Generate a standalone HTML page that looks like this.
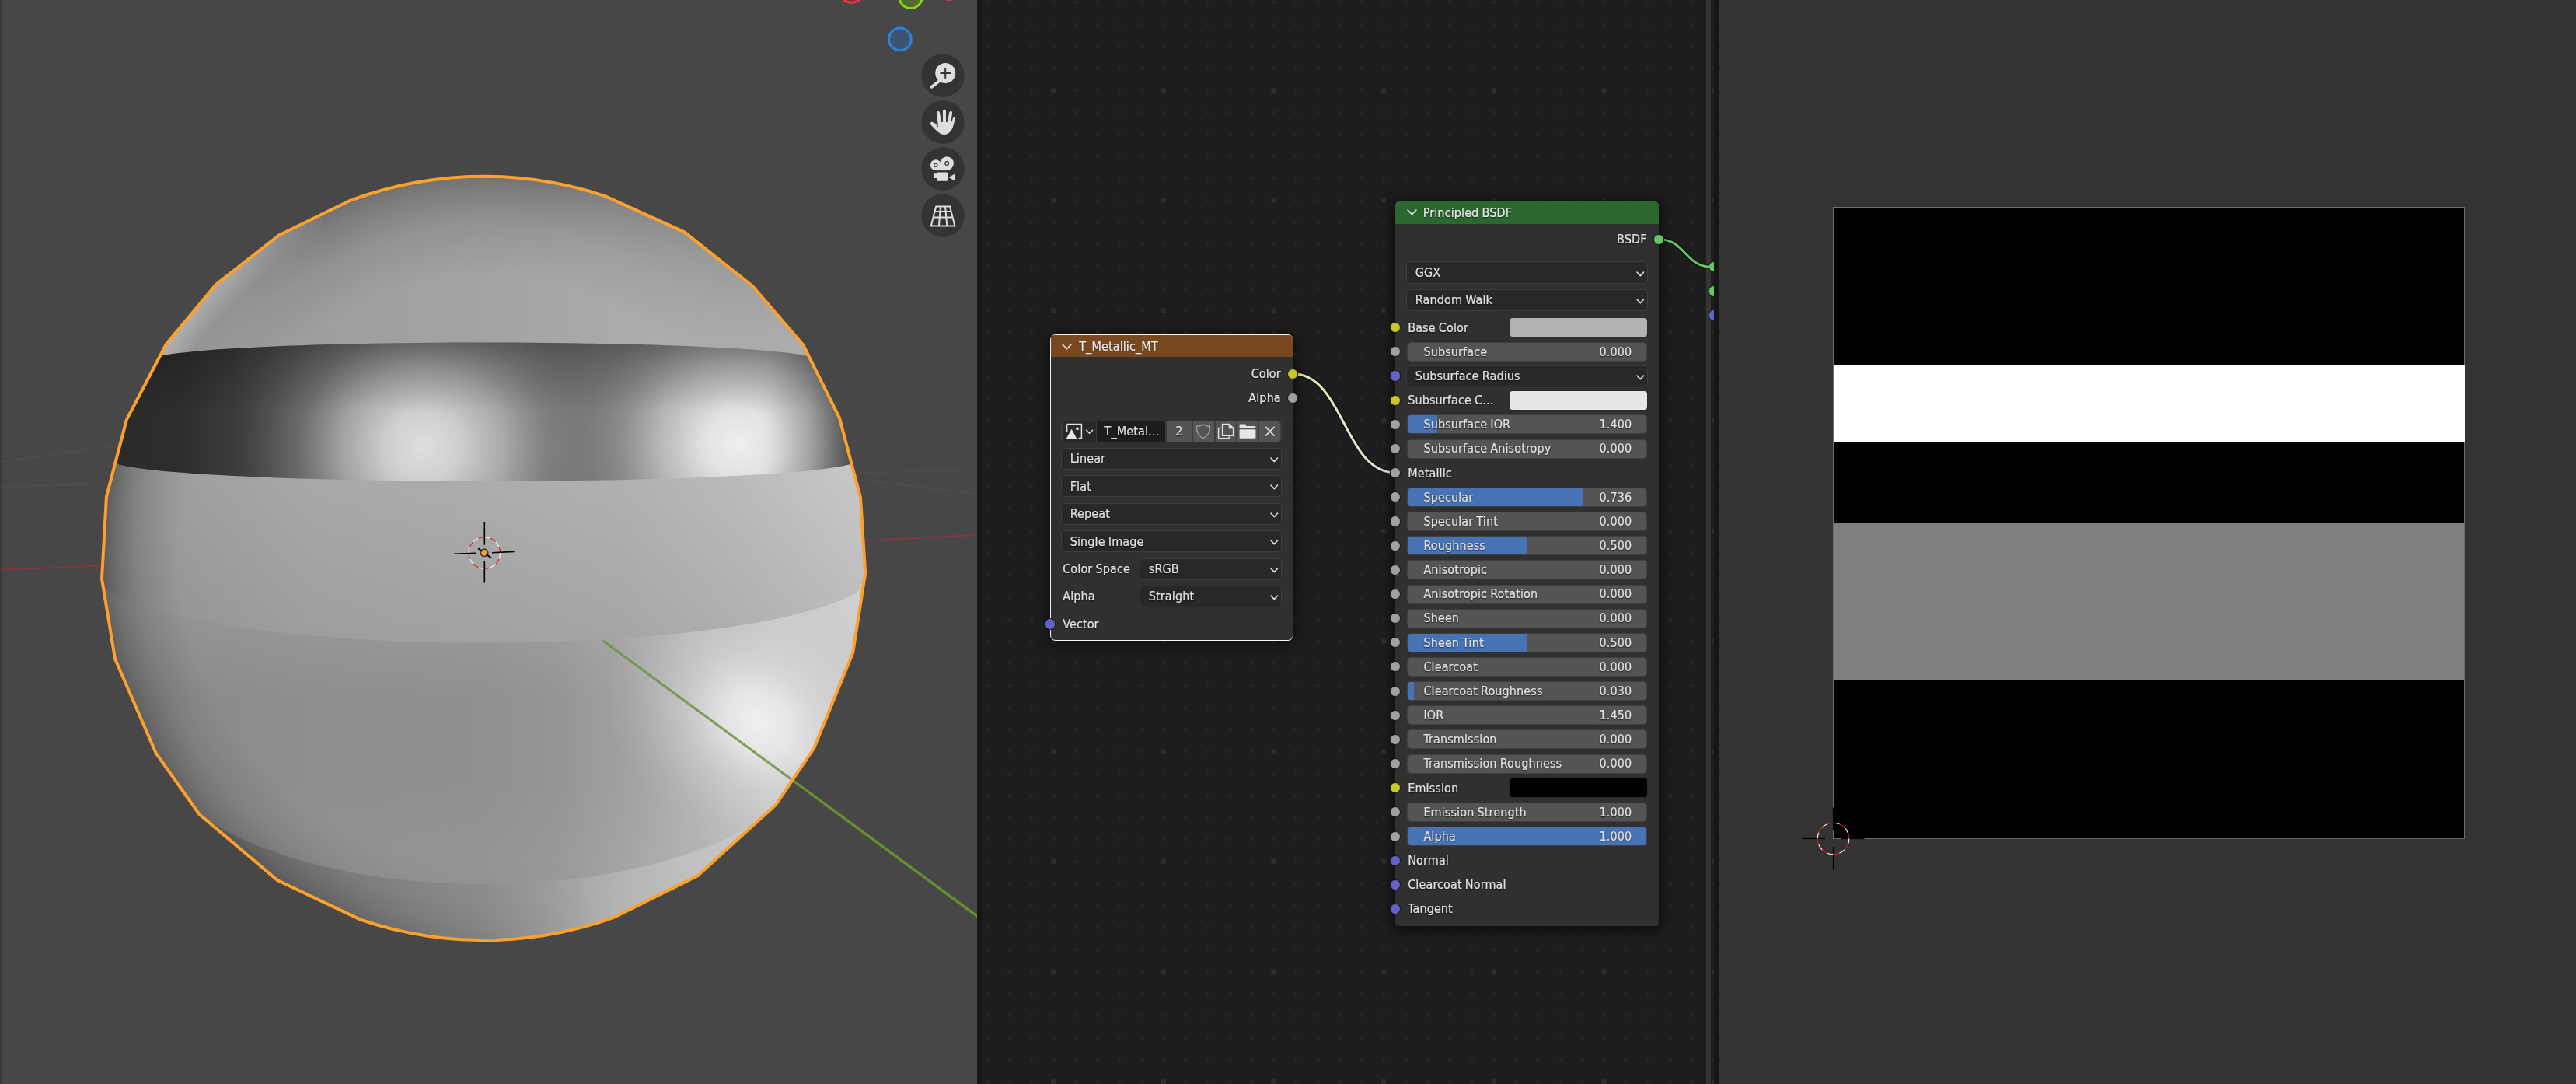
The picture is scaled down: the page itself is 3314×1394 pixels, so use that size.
<!DOCTYPE html><html><head><meta charset="utf-8"><title>Blender</title><style>

html,body{margin:0;padding:0}
body{width:3314px;height:1394px;background:#1d1d1d;position:relative;overflow:hidden;
 font-family:'DejaVu Sans Condensed','DejaVu Sans','Liberation Sans',sans-serif;font-size:16px;color:#e4e4e4;-webkit-font-smoothing:antialiased}
.abs{position:absolute}
#vp{position:absolute;left:0;top:0;width:1257px;height:1394px;background:#474747;overflow:hidden}
#ne{will-change:transform;position:absolute;left:1257px;top:0;width:955px;height:1394px;background:#1d1d1d;overflow:hidden}
#ie{position:absolute;left:2212px;top:0;width:1102px;height:1394px;background:#333333;overflow:hidden}
.node{position:absolute;box-sizing:border-box;background:#303030;border-radius:6px;box-shadow:0 2px 14px 3px rgba(0,0,0,.55)}
.hdr{position:absolute;left:0;top:0;right:0;border-radius:5px 5px 0 0}
.t{position:absolute;white-space:nowrap;letter-spacing:.12px;word-spacing:-.6px;-webkit-text-stroke:.2px currentColor;line-height:20px;height:20px;text-shadow:0 1px 1.5px rgba(0,0,0,.75)}
.dd{position:absolute;box-sizing:border-box;background:#282828;border:1.3px solid #3e3e3e;border-radius:5px}
.sl{position:absolute;box-sizing:border-box;background:#545454;border:1.3px solid #3f3f3f;border-radius:5px;overflow:hidden}
.sl i{position:absolute;left:0;top:0;bottom:0;background:#4772b3}
.sw{position:absolute;box-sizing:border-box;border-radius:4px;box-shadow:0 0 0 1px #2b2b2b}
.sk{position:absolute;width:12.2px;height:12.2px;border-radius:50%;box-sizing:content-box;border:1px solid #141414}

</style></head><body>
<div id="vp">
<svg class="abs" style="left:0;top:0" width="1257" height="1394" viewBox="0 0 1257 1394">
<defs>
<clipPath id="sph"><polygon points="450.5,257.8 471.5,250.5 492.9,244.1 514.5,238.7 536.4,234.3 558.4,230.9 580.5,228.5 602.8,227.1 625.1,226.7 647.4,227.3 669.6,229.0 691.7,231.6 713.7,235.2 735.5,239.9 757.1,245.5 778.4,252.1 880.5,298.4 968.0,367.8 1033.3,443.5 1080.0,537.5 1107.0,640.0 1113.2,737.2 1097.2,839.5 1047.0,962.5 998.0,1034.9 897.2,1126.4 788.9,1180.1 768.0,1187.1 746.8,1193.1 725.3,1198.2 703.6,1202.4 681.8,1205.5 659.8,1207.7 637.8,1208.9 615.8,1209.1 593.7,1208.3 571.7,1206.5 549.8,1203.7 528.1,1199.9 506.6,1195.2 485.2,1189.5 464.2,1182.9 356.8,1132.0 256.6,1047.3 200.8,968.7 148.0,847.3 131.0,744.0 137.0,638.4 163.0,539.6 213.9,442.5 278.2,365.5 358.7,302.5"/></clipPath>
<clipPath id="cA"><path d="M-50 462.5L197.5 462.5A425.0 22.0 0 0 1 1047.5 462.5L1300 462.5L1300 1394L-50 1394Z"/></clipPath>
<clipPath id="cB"><path d="M-50 592.0L142.5 592.0A480.0 27.0 0 0 0 1102.5 592.0L1300 592.0L1300 1394L-50 1394Z"/></clipPath>
<clipPath id="cC"><path d="M-50 735.8L122.5 735.8A500.0 91.0 0 0 0 1122.5 735.8L1300 735.8L1300 1394L-50 1394Z"/></clipPath>
<clipPath id="cD"><path d="M-50 960.0L202.5 960.0A420.0 177.0 0 0 0 1042.5 960.0L1300 960.0L1300 1394L-50 1394Z"/></clipPath>
<linearGradient id="g1" gradientUnits="userSpaceOnUse" x1="130.0" y1="0.0" x2="1110.0" y2="0.0"><stop offset="0.0000" stop-color="#8e8e8e"/><stop offset="0.1735" stop-color="#9c9c9c"/><stop offset="0.5000" stop-color="#a3a3a3"/><stop offset="0.7857" stop-color="#aeaeae"/><stop offset="1.0000" stop-color="#b9b9b9"/></linearGradient>
<radialGradient id="rimd" gradientUnits="userSpaceOnUse" cx="622.5" cy="718" r="492"><stop offset="0" stop-color="#000" stop-opacity="0"/><stop offset=".74" stop-color="#000" stop-opacity="0"/><stop offset=".87" stop-color="#000" stop-opacity=".09"/><stop offset=".95" stop-color="#000" stop-opacity=".21"/><stop offset="1" stop-color="#000" stop-opacity=".31"/></radialGradient>
<linearGradient id="rimm" gradientUnits="userSpaceOnUse" x1="230.0" y1="0.0" x2="1050.0" y2="0.0"><stop offset="0.0000" stop-color="#fff" stop-opacity="0.000"/><stop offset="0.1098" stop-color="#fff" stop-opacity="0.400"/><stop offset="0.2317" stop-color="#fff" stop-opacity="0.950"/><stop offset="0.5732" stop-color="#fff"/><stop offset="0.7561" stop-color="#fff" stop-opacity="0.600"/><stop offset="0.9390" stop-color="#fff" stop-opacity="0.200"/><stop offset="1.0000" stop-color="#fff" stop-opacity="0.100"/></linearGradient>
<mask id="mrim" maskUnits="userSpaceOnUse" x="100" y="200" width="1050" height="300"><rect x="100" y="200" width="1050" height="300" fill="url(#rimm)"/></mask>
<radialGradient id="riml" gradientUnits="userSpaceOnUse" cx="622.5" cy="718" r="492"><stop offset=".93" stop-color="#fff" stop-opacity="0"/><stop offset="1" stop-color="#fff" stop-opacity=".28"/></radialGradient>
<linearGradient id="rimlm" gradientUnits="userSpaceOnUse" x1="150.0" y1="0.0" x2="420.0" y2="0.0"><stop offset="0.0000" stop-color="#fff"/><stop offset="0.5556" stop-color="#fff" stop-opacity="0.900"/><stop offset="1.0000" stop-color="#fff" stop-opacity="0.000"/></linearGradient>
<mask id="mriml" maskUnits="userSpaceOnUse" x="100" y="200" width="1050" height="300"><rect x="100" y="200" width="1050" height="300" fill="url(#rimlm)"/></mask>
<radialGradient id="rimb" gradientUnits="userSpaceOnUse" cx="622.5" cy="718" r="492"><stop offset="0" stop-color="#000" stop-opacity="0"/><stop offset=".80" stop-color="#000" stop-opacity="0"/><stop offset=".90" stop-color="#000" stop-opacity=".08"/><stop offset=".96" stop-color="#000" stop-opacity=".19"/><stop offset="1" stop-color="#000" stop-opacity=".30"/></radialGradient>
<linearGradient id="rimbm" gradientUnits="userSpaceOnUse" x1="130.0" y1="0.0" x2="760.0" y2="0.0"><stop offset="0.0000" stop-color="#fff"/><stop offset="0.4603" stop-color="#fff" stop-opacity="0.900"/><stop offset="0.8095" stop-color="#fff" stop-opacity="0.250"/><stop offset="1.0000" stop-color="#fff" stop-opacity="0.000"/></linearGradient>
<mask id="mrimb" maskUnits="userSpaceOnUse" x="100" y="560" width="1050" height="700"><rect x="100" y="560" width="1050" height="700" fill="url(#rimbm)"/></mask>
<linearGradient id="g2" gradientUnits="userSpaceOnUse" x1="130.0" y1="0.0" x2="1110.0" y2="0.0"><stop offset="0.0000" stop-color="#292929"/><stop offset="0.1122" stop-color="#2e2e2e"/><stop offset="0.1735" stop-color="#3b3b3b"/><stop offset="0.2194" stop-color="#4a4a4a"/><stop offset="0.2653" stop-color="#575757"/><stop offset="0.3367" stop-color="#666666"/><stop offset="0.4184" stop-color="#6e6e6e"/><stop offset="0.5204" stop-color="#747474"/><stop offset="0.5867" stop-color="#707070"/><stop offset="0.6837" stop-color="#787878"/><stop offset="0.7857" stop-color="#848484"/><stop offset="0.8878" stop-color="#868686"/><stop offset="0.9490" stop-color="#727272"/><stop offset="1.0000" stop-color="#585858"/></linearGradient>
<radialGradient id="h1" gradientUnits="userSpaceOnUse" cx="0" cy="0" r="1" gradientTransform="translate(544 575) scale(235 225)"><stop offset="0" stop-color="#dedede" stop-opacity="1"/><stop offset=".2" stop-color="#dadada" stop-opacity=".9"/><stop offset=".45" stop-color="#cccccc" stop-opacity=".6"/><stop offset=".68" stop-color="#b8b8b8" stop-opacity=".22"/><stop offset=".85" stop-color="#b0b0b0" stop-opacity=".06"/><stop offset="1" stop-color="#b0b0b0" stop-opacity="0"/></radialGradient>
<radialGradient id="h2" gradientUnits="userSpaceOnUse" cx="0" cy="0" r="1" gradientTransform="translate(950 570) scale(235 225)"><stop offset="0" stop-color="#efefef" stop-opacity="1"/><stop offset=".2" stop-color="#e9e9e9" stop-opacity=".92"/><stop offset=".45" stop-color="#d8d8d8" stop-opacity=".6"/><stop offset=".68" stop-color="#c0c0c0" stop-opacity=".22"/><stop offset=".85" stop-color="#b0b0b0" stop-opacity=".06"/><stop offset="1" stop-color="#b0b0b0" stop-opacity="0"/></radialGradient>
<linearGradient id="g2r" gradientUnits="userSpaceOnUse" x1="985.0" y1="0.0" x2="1115.0" y2="0.0"><stop offset="0.0000" stop-color="#000" stop-opacity="0.000"/><stop offset="0.4231" stop-color="#000" stop-opacity="0.120"/><stop offset="0.7692" stop-color="#000" stop-opacity="0.340"/><stop offset="1.0000" stop-color="#000" stop-opacity="0.500"/></linearGradient>
<linearGradient id="g2d" gradientUnits="userSpaceOnUse" x1="0" y1="436.0" x2="0" y2="530.0"><stop offset="0.0000" stop-color="#000" stop-opacity="0.300"/><stop offset="0.3617" stop-color="#000" stop-opacity="0.160"/><stop offset="1.0000" stop-color="#000" stop-opacity="0.000"/></linearGradient>
<linearGradient id="g3" gradientUnits="userSpaceOnUse" x1="130.0" y1="0.0" x2="1110.0" y2="0.0"><stop offset="0.0000" stop-color="#848484"/><stop offset="0.0408" stop-color="#949494"/><stop offset="0.1020" stop-color="#9f9f9f"/><stop offset="0.2755" stop-color="#a9a9a9"/><stop offset="0.5000" stop-color="#adadad"/><stop offset="0.6837" stop-color="#b1b1b1"/><stop offset="0.8367" stop-color="#bbbbbb"/><stop offset="1.0000" stop-color="#c8c8c8"/></linearGradient>
<linearGradient id="g3d" gradientUnits="userSpaceOnUse" x1="0" y1="600.0" x2="0" y2="830.0"><stop offset="0.0000" stop-color="#000" stop-opacity="0.000"/><stop offset="1.0000" stop-color="#000" stop-opacity="0.070"/></linearGradient>
<linearGradient id="g4" gradientUnits="userSpaceOnUse" x1="140.0" y1="0.0" x2="1100.0" y2="0.0"><stop offset="0.0000" stop-color="#7e7e7e"/><stop offset="0.1146" stop-color="#8a8a8a"/><stop offset="0.2708" stop-color="#8e8e8e"/><stop offset="0.5000" stop-color="#909090"/><stop offset="0.6042" stop-color="#959595"/><stop offset="0.6875" stop-color="#a0a0a0"/><stop offset="0.7708" stop-color="#aeaeae"/><stop offset="0.8958" stop-color="#c4c4c4"/><stop offset="1.0000" stop-color="#cacaca"/></linearGradient>
<linearGradient id="g4v" gradientUnits="userSpaceOnUse" x1="0" y1="740.0" x2="0" y2="1140.0"><stop offset="0.0000" stop-color="#fff" stop-opacity="0.130"/><stop offset="0.4000" stop-color="#fff" stop-opacity="0.000"/><stop offset="0.6500" stop-color="#fff" stop-opacity="0.000"/><stop offset="1.0000" stop-color="#fff" stop-opacity="0.050"/></linearGradient>
<radialGradient id="g4h" gradientUnits="userSpaceOnUse" cx="0" cy="0" r="1" gradientTransform="translate(975 928) rotate(40) scale(215 170)"><stop offset="0" stop-color="#f0f0f0" stop-opacity="1"/><stop offset=".2" stop-color="#ececec" stop-opacity=".86"/><stop offset=".5" stop-color="#e0e0e0" stop-opacity=".42"/><stop offset=".8" stop-color="#d8d8d8" stop-opacity=".1"/><stop offset="1" stop-color="#d8d8d8" stop-opacity="0"/></radialGradient>
<linearGradient id="g5" gradientUnits="userSpaceOnUse" x1="260.0" y1="0.0" x2="1000.0" y2="0.0"><stop offset="0.0000" stop-color="#747474"/><stop offset="0.1892" stop-color="#808080"/><stop offset="0.3514" stop-color="#888888"/><stop offset="0.4865" stop-color="#8e8e8e"/><stop offset="0.5946" stop-color="#9c9c9c"/><stop offset="0.7297" stop-color="#b4b4b4"/><stop offset="0.8649" stop-color="#c2c2c2"/><stop offset="1.0000" stop-color="#cacaca"/></linearGradient>
</defs>
<line x1="0" y1="594" x2="200" y2="566" stroke="#fff" stroke-opacity="0.04" stroke-width="1.5"/>
<line x1="0" y1="626" x2="160" y2="622" stroke="#fff" stroke-opacity="0.04" stroke-width="1.5"/>
<line x1="1104" y1="608" x2="1257" y2="605" stroke="#fff" stroke-opacity="0.03" stroke-width="1.5"/>
<line x1="1105" y1="617" x2="1257" y2="635" stroke="#fff" stroke-opacity="0.04" stroke-width="1.5"/>
<line x1="1097" y1="575" x2="1257" y2="585" stroke="#fff" stroke-opacity="0.02" stroke-width="1.5"/>
<line x1="0" y1="732.8" x2="132" y2="727.6" stroke="#813545" stroke-width="2.1"/>
<line x1="1111" y1="695.3" x2="1257" y2="687.9" stroke="#813545" stroke-width="2.1"/>
<g clip-path="url(#sph)">
<rect x="100" y="200" width="1050" height="1040" fill="url(#g1)"/>
<g mask="url(#mrim)"><rect x="100" y="200" width="1050" height="300" fill="url(#rimd)"/></g>
<g mask="url(#mriml)"><rect x="100" y="200" width="1050" height="300" fill="url(#riml)"/></g>
<g clip-path="url(#cA)"><rect x="100" y="400" width="1050" height="900" fill="url(#g2)"/><rect x="100" y="400" width="1050" height="300" fill="url(#h1)"/><rect x="100" y="400" width="1050" height="300" fill="url(#h2)"/><rect x="100" y="430" width="1050" height="200" fill="url(#g2d)"/><rect x="980" y="430" width="170" height="200" fill="url(#g2r)"/></g>
<g clip-path="url(#cB)"><rect x="100" y="560" width="1050" height="700" fill="url(#g3)"/><rect x="100" y="560" width="1050" height="300" fill="url(#g3d)"/></g>
<g clip-path="url(#cC)"><rect x="100" y="700" width="1050" height="540" fill="url(#g4)"/><rect x="100" y="700" width="1050" height="540" fill="url(#g4v)"/><rect x="100" y="700" width="1050" height="540" fill="url(#g4h)"/></g>
<g clip-path="url(#cD)"><rect x="100" y="1000" width="1050" height="240" fill="url(#g5)"/></g>
<g clip-path="url(#cB)"><g mask="url(#mrimb)"><rect x="100" y="560" width="1050" height="700" fill="url(#rimb)"/></g></g>
</g>
<line x1="775.7" y1="824" x2="1019" y2="1002.8" stroke="#6f9140" stroke-opacity=".85" stroke-width="3"/>
<line x1="1019" y1="1002.8" x2="1258" y2="1178.9" stroke="#6a8f2e" stroke-width="3.3"/>
<polygon points="450.5,257.8 471.5,250.5 492.9,244.1 514.5,238.7 536.4,234.3 558.4,230.9 580.5,228.5 602.8,227.1 625.1,226.7 647.4,227.3 669.6,229.0 691.7,231.6 713.7,235.2 735.5,239.9 757.1,245.5 778.4,252.1 880.5,298.4 968.0,367.8 1033.3,443.5 1080.0,537.5 1107.0,640.0 1113.2,737.2 1097.2,839.5 1047.0,962.5 998.0,1034.9 897.2,1126.4 788.9,1180.1 768.0,1187.1 746.8,1193.1 725.3,1198.2 703.6,1202.4 681.8,1205.5 659.8,1207.7 637.8,1208.9 615.8,1209.1 593.7,1208.3 571.7,1206.5 549.8,1203.7 528.1,1199.9 506.6,1195.2 485.2,1189.5 464.2,1182.9 356.8,1132.0 256.6,1047.3 200.8,968.7 148.0,847.3 131.0,744.0 137.0,638.4 163.0,539.6 213.9,442.5 278.2,365.5 358.7,302.5" fill="none" stroke="#fca12d" stroke-width="4" stroke-linejoin="round"/>
<path d="M623.30 690.70A20.3 20.3 0 0 1 631.07 692.25" stroke="#ffffff" stroke-width="1.05" fill="none"/>
<path d="M631.07 692.25A20.3 20.3 0 0 1 637.65 696.65" stroke="#f01020" stroke-width="1.05" fill="none"/>
<path d="M637.65 696.65A20.3 20.3 0 0 1 642.05 703.23" stroke="#ffffff" stroke-width="1.05" fill="none"/>
<path d="M642.05 703.23A20.3 20.3 0 0 1 643.60 711.00" stroke="#f01020" stroke-width="1.05" fill="none"/>
<path d="M643.60 711.00A20.3 20.3 0 0 1 642.05 718.77" stroke="#ffffff" stroke-width="1.05" fill="none"/>
<path d="M642.05 718.77A20.3 20.3 0 0 1 637.65 725.35" stroke="#f01020" stroke-width="1.05" fill="none"/>
<path d="M637.65 725.35A20.3 20.3 0 0 1 631.07 729.75" stroke="#ffffff" stroke-width="1.05" fill="none"/>
<path d="M631.07 729.75A20.3 20.3 0 0 1 623.30 731.30" stroke="#f01020" stroke-width="1.05" fill="none"/>
<path d="M623.30 731.30A20.3 20.3 0 0 1 615.53 729.75" stroke="#ffffff" stroke-width="1.05" fill="none"/>
<path d="M615.53 729.75A20.3 20.3 0 0 1 608.95 725.35" stroke="#f01020" stroke-width="1.05" fill="none"/>
<path d="M608.95 725.35A20.3 20.3 0 0 1 604.55 718.77" stroke="#ffffff" stroke-width="1.05" fill="none"/>
<path d="M604.55 718.77A20.3 20.3 0 0 1 603.00 711.00" stroke="#f01020" stroke-width="1.05" fill="none"/>
<path d="M603.00 711.00A20.3 20.3 0 0 1 604.55 703.23" stroke="#ffffff" stroke-width="1.05" fill="none"/>
<path d="M604.55 703.23A20.3 20.3 0 0 1 608.95 696.65" stroke="#f01020" stroke-width="1.05" fill="none"/>
<path d="M608.95 696.65A20.3 20.3 0 0 1 615.53 692.25" stroke="#ffffff" stroke-width="1.05" fill="none"/>
<path d="M615.53 692.25A20.3 20.3 0 0 1 623.30 690.70" stroke="#f01020" stroke-width="1.05" fill="none"/>
<line x1="623.3" y1="671.0" x2="623.3" y2="700.7" stroke="#000" stroke-width="1.6"/>
<line x1="623.3" y1="721.0" x2="623.3" y2="749.6" stroke="#000" stroke-width="1.6"/>
<line x1="584.1" y1="712.3" x2="612.7" y2="711.4" stroke="#000" stroke-width="1.6"/>
<line x1="633.0" y1="710.7" x2="661.6" y2="709.4" stroke="#000" stroke-width="1.6"/>
<line x1="615.3" y1="705.3" x2="631.9" y2="717.3" stroke="#000" stroke-width="1.6"/>
<circle cx="623.1" cy="710.8" r="4.7" fill="#f9a030" stroke="#3a3a3a" stroke-width="1.7"/>
<line x1="625.4" y1="712.6" x2="631.9" y2="717.3" stroke="#000" stroke-width="1.6"/>
<line x1="615.3" y1="705.3" x2="620.5" y2="708.9" stroke="#000" stroke-width="1.6"/>
<circle cx="1095.5" cy="-11.6" r="15" fill="#6f3a45" stroke="#f2334f" stroke-width="3"/>
<circle cx="1171.6" cy="-4.2" r="14.8" fill="#54692f" stroke="#86d80f" stroke-width="3"/>
<circle cx="1157.9" cy="50.4" r="14.4" fill="#3d5470" stroke="#2f80dc" stroke-width="3"/>
<circle cx="1220.8" cy="-10" r="11" fill="#f2334f"/>
<circle cx="1213" cy="97.1" r="27.8" fill="#333333"/>
<circle cx="1213" cy="157.0" r="27.8" fill="#333333"/>
<circle cx="1213" cy="217.0" r="27.8" fill="#333333"/>
<circle cx="1213" cy="277.0" r="27.8" fill="#333333"/>
<line x1="1207.6" y1="104.8" x2="1198.6" y2="111.7" stroke="#dedede" stroke-width="3.8" stroke-linecap="round"/>
<circle cx="1216.2" cy="94" r="13" fill="#dedede"/>
<path d="M1209.5 94H1222.9M1216.2 87.3V100.7" stroke="#333" stroke-width="2"/>
<path transform="translate(1190 134) scale(0.042435)" d="M170 560C175 530 215 535 240 548L350 598L352 675Q375 700 398 675L355 262C350 200 440 195 448 255L497 535L540 540L540 205C540 145 636 145 636 205L636 540L680 538L733 252C745 195 838 205 826 262L790 532L812 528L848 418C868 378 935 395 918 445L845 690C810 800 730 915 580 920C470 920 390 840 300 755L175 625C155 605 160 575 170 560Z" fill="#dedede"/>
<circle cx="1203.8" cy="212.2" r="6.9" fill="#dedede"/><circle cx="1218.2" cy="210" r="8.7" fill="#dedede"/>
<rect x="1203.8" y="211" width="14.4" height="8.1" fill="#dedede"/>
<circle cx="1203.8" cy="212.2" r="2.1" fill="#dedede" stroke="#333" stroke-width="1.3"/><circle cx="1218.2" cy="210" r="2.3" fill="#dedede" stroke="#333" stroke-width="1.3"/>
<rect x="1205.4" y="221.4" width="13.6" height="11.4" rx="1" fill="#dedede"/><rect x="1201" y="223.2" width="5" height="5.8" fill="#dedede"/>
<path d="M1220.4 228L1228.8 223.2V232.8Z" fill="#dedede"/>
<path d="M1204.2 265.4H1222L1228.4 290.4H1197.8ZM1210 265.4L1207.9 290.4M1216 265.4L1218.3 290.4M1202.6 271.9H1223.6M1200.6 279.6H1225.6" fill="none" stroke="#dedede" stroke-width="2"/>
<rect x="0" y="0" width="2" height="1394" fill="#3a3a3a"/>
</svg>
</div>
<div id="ne">
<div class="abs" style="left:0;top:0;width:6px;height:1394px;background:#161616"></div>
<svg class="abs" style="left:0;top:0" width="955" height="1394"><defs><pattern id="dots" x="96.20" y="114.25" width="28.33" height="28.33" patternUnits="userSpaceOnUse"><rect x="0" y="0" width="4" height="4" fill="#252525"/></pattern><pattern id="mdots" x="95.20" y="113.25" width="141.65" height="141.65" patternUnits="userSpaceOnUse"><rect x="0" y="0" width="6" height="6" fill="#2d2d2d"/></pattern></defs><rect x="6" y="0" width="942" height="1394" fill="url(#dots)"/><rect x="6" y="0" width="942" height="1394" fill="url(#mdots)"/></svg>
<div class="abs" style="left:938px;top:0;width:6px;height:1394px;background:#353535"></div>
<div class="abs" style="left:948px;top:0;width:7px;height:1394px;background:#161616"></div>
<svg class="abs" style="left:0;top:0" width="955" height="1394" viewBox="1257 0 955 1394">
<defs><linearGradient id="lk1" gradientUnits="userSpaceOnUse" x1="1663" y1="0" x2="1795" y2="0"><stop offset="0" stop-color="#e8e8a2"/><stop offset="0.4" stop-color="#e8e8c0"/><stop offset="0.7" stop-color="#e2e2d6"/><stop offset="1" stop-color="#dedede"/></linearGradient></defs>
<path d="M1663 480.8C1729 480.8 1729 607.8 1795 607.8" fill="none" stroke="#000" stroke-opacity=".55" stroke-width="5.4"/>
<path d="M1663 480.8C1729 480.8 1729 607.8 1795 607.8" fill="none" stroke="url(#lk1)" stroke-width="3"/>
<path d="M2134 307.7C2168 307.7 2168 343.4 2202 343.4" fill="none" stroke="#000" stroke-opacity=".55" stroke-width="5.4"/>
<path d="M2134 307.7C2168 307.7 2168 343.4 2202 343.4" fill="none" stroke="#63c763" stroke-width="3"/>
</svg>
<div class="node" style="left:93.5px;top:430.3px;width:313.3px;height:393.4px;border:1.6px solid #f4f4f4;border-radius:7px">
<div class="hdr" style="height:27.9px;background:#7a481f"></div></div>
<svg class="abs" style="left:110.2px;top:442.7px;overflow:visible" width="13" height="7"><path d="M0 0L5.5 5.8L11.0 0" fill="none" stroke="#e6e6e6" stroke-width="1.6" stroke-linecap="round" stroke-linejoin="round"/></svg>
<div class="t" style="left:131.2px;top:435.7px;color:#ececec;">T_Metallic_MT</div>
<div class="t" style="right:564.2px;top:471.1px;color:#e2e2e2;text-align:right;">Color</div>
<div class="t" style="right:564.2px;top:502.1px;color:#e2e2e2;text-align:right;">Alpha</div>
<div class="sk" style="left:398.8px;top:473.7px;background:#c7c729"></div>
<div class="sk" style="left:398.8px;top:504.7px;background:#a1a1a1"></div>
<div class="abs" style="left:108.2px;top:540.7px;width:283.5px;height:28.2px;background:#3c3c3c;border-radius:5px"></div>
<div class="abs" style="left:109.5px;top:542.0px;width:43.3px;height:25.6px;background:#282828;border-radius:4px 0 0 4px"></div>
<div class="abs" style="left:154.0px;top:542.0px;width:88.0px;height:25.6px;background:#1d1d1d;border-radius:0"></div>
<div class="abs" style="left:243.5px;top:542.0px;width:32.5px;height:25.6px;background:#545454;border-radius:0"></div>
<div class="abs" style="left:277.6px;top:542.0px;width:27.4px;height:25.6px;background:#545454;border-radius:0"></div>
<div class="abs" style="left:306.6px;top:542.0px;width:26.6px;height:25.6px;background:#545454;border-radius:0"></div>
<div class="abs" style="left:334.8px;top:542.0px;width:26.6px;height:25.6px;background:#545454;border-radius:0"></div>
<div class="abs" style="left:363.0px;top:542.0px;width:27.4px;height:25.6px;background:#545454;border-radius:0 4px 4px 0"></div>
<div class="t" style="left:163.5px;top:545.1px;color:#e2e2e2;">T_Metal…</div>
<div class="t" style="left:255.3px;top:545.1px;color:#e2e2e2;">2</div>
<svg class="abs" style="left:0;top:0" width="955" height="1394" viewBox="1257 0 955 1394">
<path d="M1372.6 545.6H1391.4V563.6H1387.5" fill="none" stroke="#e0e0e0" stroke-width="1.5"/><path d="M1372.6 545.6V556" fill="none" stroke="#e0e0e0" stroke-width="1.5"/>
<path d="M1371.8 563.9L1378.6 551.8L1385.2 563.9Z" fill="#e6e6e6"/><circle cx="1386" cy="551.3" r="1.9" fill="#e6e6e6"/>
<path d="M1397.6 553.2L1401.6 557.3L1405.6 553.2" fill="none" stroke="#dcdcdc" stroke-width="1.5" stroke-linecap="round" stroke-linejoin="round"/>
<path d="M1548 545.8C1545 547.6 1542 548.3 1539.3 548.3C1539.3 555.5 1541.6 560.8 1548 563.6C1554.4 560.8 1556.7 555.5 1556.7 548.3C1554 548.3 1551 547.6 1548 545.8Z" fill="none" stroke="#9a9a9a" stroke-width="1.4"/>
<path d="M1572.6 545.4H1581.2L1586.6 550.6V560.2H1572.6Z" fill="#545454" stroke="#e0e0e0" stroke-width="1.5" stroke-linejoin="round"/><path d="M1581.2 545.2V550.8H1586.8Z" fill="#e0e0e0" stroke="#e0e0e0" stroke-width="1"/><path d="M1570.6 550.6H1567.6V563.8H1581.2V561.4" fill="none" stroke="#e0e0e0" stroke-width="1.5"/>
<path d="M1594.6 548.4V546.6Q1594.6 545.6 1595.6 545.6H1601.8L1603.6 547.9H1614.6Q1615.4 547.9 1615.4 548.8V550.4H1594.6Z" fill="#e6e6e6"/><rect x="1594.6" y="552.3" width="20.8" height="11.4" rx="0.8" fill="#e6e6e6"/>
<path d="M1628.6 549.4L1639 560.2M1639 549.4L1628.6 560.2" stroke="#e0e0e0" stroke-width="1.7" stroke-linecap="round"/>
</svg>
<div class="dd" style="left:108.1px;top:576.0px;width:284.1px;height:28.1px"></div>
<div class="t" style="left:119.7px;top:580.3px;color:#e2e2e2;">Linear</div>
<svg class="abs" style="left:378.3px;top:589.0px;overflow:visible" width="10" height="6"><path d="M0 0L4.3 4.6L8.6 0" fill="none" stroke="#dddddd" stroke-width="1.6" stroke-linecap="round" stroke-linejoin="round"/></svg>
<div class="dd" style="left:108.1px;top:611.4px;width:284.1px;height:28.1px"></div>
<div class="t" style="left:119.7px;top:615.8px;color:#e2e2e2;">Flat</div>
<svg class="abs" style="left:378.3px;top:624.4px;overflow:visible" width="10" height="6"><path d="M0 0L4.3 4.6L8.6 0" fill="none" stroke="#dddddd" stroke-width="1.6" stroke-linecap="round" stroke-linejoin="round"/></svg>
<div class="dd" style="left:108.1px;top:646.7px;width:284.1px;height:28.1px"></div>
<div class="t" style="left:119.7px;top:651.0px;color:#e2e2e2;">Repeat</div>
<svg class="abs" style="left:378.3px;top:659.7px;overflow:visible" width="10" height="6"><path d="M0 0L4.3 4.6L8.6 0" fill="none" stroke="#dddddd" stroke-width="1.6" stroke-linecap="round" stroke-linejoin="round"/></svg>
<div class="dd" style="left:108.1px;top:682.1px;width:284.1px;height:28.1px"></div>
<div class="t" style="left:119.7px;top:686.5px;color:#e2e2e2;">Single Image</div>
<svg class="abs" style="left:378.3px;top:695.1px;overflow:visible" width="10" height="6"><path d="M0 0L4.3 4.6L8.6 0" fill="none" stroke="#dddddd" stroke-width="1.6" stroke-linecap="round" stroke-linejoin="round"/></svg>
<div class="dd" style="left:209.2px;top:717.5px;width:183.0px;height:28.2px"></div>
<div class="t" style="left:220.8px;top:721.9px;color:#e2e2e2;">sRGB</div>
<svg class="abs" style="left:378.3px;top:730.5px;overflow:visible" width="10" height="6"><path d="M0 0L4.3 4.6L8.6 0" fill="none" stroke="#dddddd" stroke-width="1.6" stroke-linecap="round" stroke-linejoin="round"/></svg>
<div class="dd" style="left:209.2px;top:752.9px;width:183.0px;height:28.4px"></div>
<div class="t" style="left:220.8px;top:757.4px;color:#e2e2e2;">Straight</div>
<svg class="abs" style="left:378.3px;top:766.0px;overflow:visible" width="10" height="6"><path d="M0 0L4.3 4.6L8.6 0" fill="none" stroke="#dddddd" stroke-width="1.6" stroke-linecap="round" stroke-linejoin="round"/></svg>
<div class="t" style="left:110.2px;top:721.9px;color:#e2e2e2;">Color Space</div>
<div class="t" style="left:110.2px;top:757.4px;color:#e2e2e2;">Alpha</div>
<div class="t" style="left:110.2px;top:792.8px;color:#e2e2e2;">Vector</div>
<div class="sk" style="left:87.1px;top:795.4px;background:#6363c7"></div>
<div class="node" style="left:537.1px;top:257.8px;width:341.1px;height:934.7px;border:1px solid #141414">
<div class="hdr" style="height:28.8px;background:#2b672e"></div></div>
<svg class="abs" style="left:554.1px;top:270.3px;overflow:visible" width="13" height="7"><path d="M0 0L5.5 5.8L11.0 0" fill="none" stroke="#e6e6e6" stroke-width="1.6" stroke-linecap="round" stroke-linejoin="round"/></svg>
<div class="t" style="left:573.7px;top:263.5px;color:#ececec;">Principled BSDF</div>
<div class="t" style="right:93.4px;top:298.0px;color:#e2e2e2;text-align:right;">BSDF</div>
<div class="sk" style="left:870.1px;top:300.6px;background:#63c763"></div>
<div class="dd" style="left:552.2px;top:336.3px;width:310.6px;height:28.6px"></div>
<div class="t" style="left:563.8px;top:340.9px;color:#e2e2e2;">GGX</div>
<svg class="abs" style="left:848.9px;top:349.5px;overflow:visible" width="10" height="6"><path d="M0 0L4.3 4.6L8.6 0" fill="none" stroke="#dddddd" stroke-width="1.6" stroke-linecap="round" stroke-linejoin="round"/></svg>
<div class="dd" style="left:552.2px;top:371.8px;width:310.6px;height:28.4px"></div>
<div class="t" style="left:563.8px;top:376.3px;color:#e2e2e2;">Random Walk</div>
<svg class="abs" style="left:848.9px;top:384.9px;overflow:visible" width="10" height="6"><path d="M0 0L4.3 4.6L8.6 0" fill="none" stroke="#dddddd" stroke-width="1.6" stroke-linecap="round" stroke-linejoin="round"/></svg>
<div class="sw" style="left:684.8px;top:409.0px;width:176.8px;height:24.2px;background:#b3b3b3"></div>
<div class="t" style="left:554.2px;top:411.5px;color:#e2e2e2;">Base Color</div>
<div class="sk" style="left:530.8px;top:414.1px;background:#c7c729"></div>
<div class="sl" style="left:553.2px;top:439.9px;width:308.6px;height:25.0px"></div>
<div class="t" style="left:574.4px;top:442.7px;color:#e2e2e2;">Subsurface</div>
<div class="t" style="right:112.7px;top:442.7px;color:#e2e2e2;text-align:right;">0.000</div>
<div class="sk" style="left:530.8px;top:445.3px;background:#a1a1a1"></div>
<div class="dd" style="left:552.2px;top:469.7px;width:310.6px;height:27.8px"></div>
<div class="t" style="left:563.8px;top:473.9px;color:#e2e2e2;">Subsurface Radius</div>
<svg class="abs" style="left:848.9px;top:482.5px;overflow:visible" width="10" height="6"><path d="M0 0L4.3 4.6L8.6 0" fill="none" stroke="#dddddd" stroke-width="1.6" stroke-linecap="round" stroke-linejoin="round"/></svg>
<div class="sk" style="left:530.8px;top:476.4px;background:#6363c7"></div>
<div class="sw" style="left:684.8px;top:502.5px;width:176.8px;height:24.2px;background:#e7e7e7"></div>
<div class="t" style="left:554.2px;top:505.0px;color:#e2e2e2;">Subsurface C…</div>
<div class="sk" style="left:530.8px;top:507.6px;background:#c7c729"></div>
<div class="sl" style="left:553.2px;top:533.3px;width:308.6px;height:25.0px"><i style="width:38.0px"></i></div>
<div class="t" style="left:574.4px;top:536.1px;color:#e2e2e2;">Subsurface IOR</div>
<div class="t" style="right:112.7px;top:536.1px;color:#e2e2e2;text-align:right;">1.400</div>
<div class="sk" style="left:530.8px;top:538.7px;background:#a1a1a1"></div>
<div class="sl" style="left:553.2px;top:564.5px;width:308.6px;height:25.0px"></div>
<div class="t" style="left:574.4px;top:567.3px;color:#e2e2e2;">Subsurface Anisotropy</div>
<div class="t" style="right:112.7px;top:567.3px;color:#e2e2e2;text-align:right;">0.000</div>
<div class="sk" style="left:530.8px;top:569.9px;background:#a1a1a1"></div>
<div class="t" style="left:554.2px;top:598.5px;color:#e2e2e2;">Metallic</div>
<div class="sk" style="left:530.8px;top:601.1px;background:#a1a1a1"></div>
<div class="sl" style="left:553.2px;top:626.8px;width:308.6px;height:25.0px"><i style="width:225.8px"></i></div>
<div class="t" style="left:574.4px;top:629.6px;color:#e2e2e2;">Specular</div>
<div class="t" style="right:112.7px;top:629.6px;color:#e2e2e2;text-align:right;">0.736</div>
<div class="sk" style="left:530.8px;top:632.2px;background:#a1a1a1"></div>
<div class="sl" style="left:553.2px;top:658.0px;width:308.6px;height:25.0px"></div>
<div class="t" style="left:574.4px;top:660.8px;color:#e2e2e2;">Specular Tint</div>
<div class="t" style="right:112.7px;top:660.8px;color:#e2e2e2;text-align:right;">0.000</div>
<div class="sk" style="left:530.8px;top:663.4px;background:#a1a1a1"></div>
<div class="sl" style="left:553.2px;top:689.1px;width:308.6px;height:25.0px"><i style="width:153.0px"></i></div>
<div class="t" style="left:574.4px;top:691.9px;color:#e2e2e2;">Roughness</div>
<div class="t" style="right:112.7px;top:691.9px;color:#e2e2e2;text-align:right;">0.500</div>
<div class="sk" style="left:530.8px;top:694.5px;background:#a1a1a1"></div>
<div class="sl" style="left:553.2px;top:720.3px;width:308.6px;height:25.0px"></div>
<div class="t" style="left:574.4px;top:723.1px;color:#e2e2e2;">Anisotropic</div>
<div class="t" style="right:112.7px;top:723.1px;color:#e2e2e2;text-align:right;">0.000</div>
<div class="sk" style="left:530.8px;top:725.7px;background:#a1a1a1"></div>
<div class="sl" style="left:553.2px;top:751.5px;width:308.6px;height:25.0px"></div>
<div class="t" style="left:574.4px;top:754.3px;color:#e2e2e2;">Anisotropic Rotation</div>
<div class="t" style="right:112.7px;top:754.3px;color:#e2e2e2;text-align:right;">0.000</div>
<div class="sk" style="left:530.8px;top:756.9px;background:#a1a1a1"></div>
<div class="sl" style="left:553.2px;top:782.6px;width:308.6px;height:25.0px"></div>
<div class="t" style="left:574.4px;top:785.4px;color:#e2e2e2;">Sheen</div>
<div class="t" style="right:112.7px;top:785.4px;color:#e2e2e2;text-align:right;">0.000</div>
<div class="sk" style="left:530.8px;top:788.0px;background:#a1a1a1"></div>
<div class="sl" style="left:553.2px;top:813.8px;width:308.6px;height:25.0px"><i style="width:153.0px"></i></div>
<div class="t" style="left:574.4px;top:816.6px;color:#e2e2e2;">Sheen Tint</div>
<div class="t" style="right:112.7px;top:816.6px;color:#e2e2e2;text-align:right;">0.500</div>
<div class="sk" style="left:530.8px;top:819.2px;background:#a1a1a1"></div>
<div class="sl" style="left:553.2px;top:844.9px;width:308.6px;height:25.0px"></div>
<div class="t" style="left:574.4px;top:847.7px;color:#e2e2e2;">Clearcoat</div>
<div class="t" style="right:112.7px;top:847.7px;color:#e2e2e2;text-align:right;">0.000</div>
<div class="sk" style="left:530.8px;top:850.3px;background:#a1a1a1"></div>
<div class="sl" style="left:553.2px;top:876.1px;width:308.6px;height:25.0px"><i style="width:8.0px"></i></div>
<div class="t" style="left:574.4px;top:878.9px;color:#e2e2e2;">Clearcoat Roughness</div>
<div class="t" style="right:112.7px;top:878.9px;color:#e2e2e2;text-align:right;">0.030</div>
<div class="sk" style="left:530.8px;top:881.5px;background:#a1a1a1"></div>
<div class="sl" style="left:553.2px;top:907.3px;width:308.6px;height:25.0px"></div>
<div class="t" style="left:574.4px;top:910.1px;color:#e2e2e2;">IOR</div>
<div class="t" style="right:112.7px;top:910.1px;color:#e2e2e2;text-align:right;">1.450</div>
<div class="sk" style="left:530.8px;top:912.7px;background:#a1a1a1"></div>
<div class="sl" style="left:553.2px;top:938.4px;width:308.6px;height:25.0px"></div>
<div class="t" style="left:574.4px;top:941.2px;color:#e2e2e2;">Transmission</div>
<div class="t" style="right:112.7px;top:941.2px;color:#e2e2e2;text-align:right;">0.000</div>
<div class="sk" style="left:530.8px;top:943.8px;background:#a1a1a1"></div>
<div class="sl" style="left:553.2px;top:969.6px;width:308.6px;height:25.0px"></div>
<div class="t" style="left:574.4px;top:972.4px;color:#e2e2e2;">Transmission Roughness</div>
<div class="t" style="right:112.7px;top:972.4px;color:#e2e2e2;text-align:right;">0.000</div>
<div class="sk" style="left:530.8px;top:975.0px;background:#a1a1a1"></div>
<div class="sw" style="left:684.8px;top:1001.0px;width:176.8px;height:24.2px;background:#000000"></div>
<div class="t" style="left:554.2px;top:1003.5px;color:#e2e2e2;">Emission</div>
<div class="sk" style="left:530.8px;top:1006.1px;background:#c7c729"></div>
<div class="sl" style="left:553.2px;top:1031.9px;width:308.6px;height:25.0px"></div>
<div class="t" style="left:574.4px;top:1034.7px;color:#e2e2e2;">Emission Strength</div>
<div class="t" style="right:112.7px;top:1034.7px;color:#e2e2e2;text-align:right;">1.000</div>
<div class="sk" style="left:530.8px;top:1037.3px;background:#a1a1a1"></div>
<div class="sl" style="left:553.2px;top:1063.1px;width:308.6px;height:25.0px"><i style="width:307.3px"></i></div>
<div class="t" style="left:574.4px;top:1065.9px;color:#e2e2e2;">Alpha</div>
<div class="t" style="right:112.7px;top:1065.9px;color:#e2e2e2;text-align:right;">1.000</div>
<div class="sk" style="left:530.8px;top:1068.5px;background:#a1a1a1"></div>
<div class="t" style="left:554.2px;top:1097.0px;color:#e2e2e2;">Normal</div>
<div class="sk" style="left:530.8px;top:1099.6px;background:#6363c7"></div>
<div class="t" style="left:554.2px;top:1128.2px;color:#e2e2e2;">Clearcoat Normal</div>
<div class="sk" style="left:530.8px;top:1130.8px;background:#6363c7"></div>
<div class="t" style="left:554.2px;top:1159.3px;color:#e2e2e2;">Tangent</div>
<div class="sk" style="left:530.8px;top:1161.9px;background:#6363c7"></div>
<div class="abs" style="left:938.0px;top:0;width:10.0px;height:1394px;overflow:hidden">
<div class="sk" style="left:3.1px;top:336.3px;background:#63c763"></div>
<div class="sk" style="left:3.1px;top:367.4px;background:#63c763"></div>
<div class="sk" style="left:3.1px;top:398.4px;background:#6363c7"></div>
</div>
</div>
<div id="ie">
<div class="abs" style="left:146px;top:266px;width:813px;height:813px;background:#6e6e6e"></div>
<div class="abs" style="left:147px;top:267px;width:811px;height:811px;background:#000"></div>
<div class="abs" style="left:147px;top:470px;width:812px;height:99px;background:#fff"></div>
<div class="abs" style="left:147px;top:672px;width:811px;height:203px;background:#7f7f7f"></div>
<svg class="abs" style="left:0;top:0" width="1102" height="1394" viewBox="0 0 1102 1394"><line x1="106.5" y1="1078.5" x2="136.0" y2="1078.5" stroke="#000" stroke-width="1.2"/><line x1="157.0" y1="1078.5" x2="186.5" y2="1078.5" stroke="#000" stroke-width="1.2"/><line x1="146.5" y1="1038.5" x2="146.5" y2="1068.0" stroke="#000" stroke-width="1.2"/><line x1="146.5" y1="1089.0" x2="146.5" y2="1118.5" stroke="#000" stroke-width="1.2"/><path d="M146.50 1058.20A20.3 20.3 0 0 1 154.27 1059.75" stroke="#ffffff" stroke-width="1.1" fill="none"/><path d="M154.27 1059.75A20.3 20.3 0 0 1 160.85 1064.15" stroke="#e8101c" stroke-width="1.1" fill="none"/><path d="M160.85 1064.15A20.3 20.3 0 0 1 165.25 1070.73" stroke="#ffffff" stroke-width="1.1" fill="none"/><path d="M165.25 1070.73A20.3 20.3 0 0 1 166.80 1078.50" stroke="#e8101c" stroke-width="1.1" fill="none"/><path d="M166.80 1078.50A20.3 20.3 0 0 1 165.25 1086.27" stroke="#ffffff" stroke-width="1.1" fill="none"/><path d="M165.25 1086.27A20.3 20.3 0 0 1 160.85 1092.85" stroke="#e8101c" stroke-width="1.1" fill="none"/><path d="M160.85 1092.85A20.3 20.3 0 0 1 154.27 1097.25" stroke="#ffffff" stroke-width="1.1" fill="none"/><path d="M154.27 1097.25A20.3 20.3 0 0 1 146.50 1098.80" stroke="#e8101c" stroke-width="1.1" fill="none"/><path d="M146.50 1098.80A20.3 20.3 0 0 1 138.73 1097.25" stroke="#ffffff" stroke-width="1.1" fill="none"/><path d="M138.73 1097.25A20.3 20.3 0 0 1 132.15 1092.85" stroke="#e8101c" stroke-width="1.1" fill="none"/><path d="M132.15 1092.85A20.3 20.3 0 0 1 127.75 1086.27" stroke="#ffffff" stroke-width="1.1" fill="none"/><path d="M127.75 1086.27A20.3 20.3 0 0 1 126.20 1078.50" stroke="#e8101c" stroke-width="1.1" fill="none"/><path d="M126.20 1078.50A20.3 20.3 0 0 1 127.75 1070.73" stroke="#ffffff" stroke-width="1.1" fill="none"/><path d="M127.75 1070.73A20.3 20.3 0 0 1 132.15 1064.15" stroke="#e8101c" stroke-width="1.1" fill="none"/><path d="M132.15 1064.15A20.3 20.3 0 0 1 138.73 1059.75" stroke="#ffffff" stroke-width="1.1" fill="none"/><path d="M138.73 1059.75A20.3 20.3 0 0 1 146.50 1058.20" stroke="#e8101c" stroke-width="1.1" fill="none"/></svg>
</div>
</body></html>
